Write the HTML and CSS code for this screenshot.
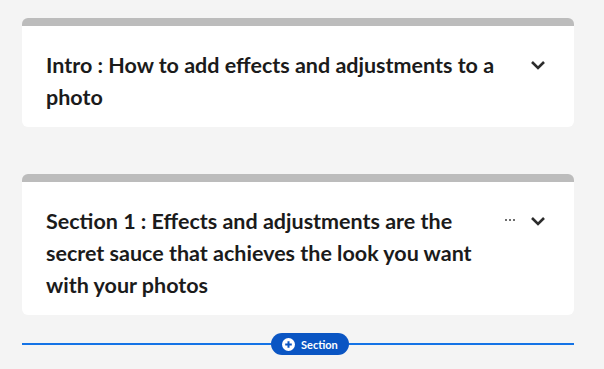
FILE: index.html
```html
<!DOCTYPE html>
<html>
<head>
	<title>Course outline</title>
	<link rel="stylesheet" href="styles.css">
</head>
<body>
<div class="outline">
	<div class="card">
		<div class="card-head">
			<h2 class="card-title">Intro : How to add effects and adjustments to a photo</h2>
			<div class="card-actions">
				<a class="toggle" href="javascript:void(0)">
					<svg width="16" height="10" viewBox="0 0 16 10"><path d="M2 2 L8 8 L14 2" fill="none" stroke="#2c2c2c" stroke-width="2.6" stroke-linejoin="miter"/></svg>
				</a>
			</div>
		</div>
	</div>

	<div class="card">
		<div class="card-head">
			<h2 class="card-title">Section 1 : Effects and adjustments are the secret sauce that achieves the look you want with your photos</h2>
			<div class="card-actions">
				<a class="more" href="javascript:void(0)"><i></i><i></i><i></i></a>
				<a class="toggle" href="javascript:void(0)">
					<svg width="16" height="10" viewBox="0 0 16 10"><path d="M2 2 L8 8 L14 2" fill="none" stroke="#2c2c2c" stroke-width="2.6" stroke-linejoin="miter"/></svg>
				</a>
			</div>
		</div>
	</div>

	<div class="add-row">
		<span class="add-line add-line-left"></span>
		<a class="add-section" href="javascript:void(0)">
			<svg width="13" height="13" viewBox="0 0 13 13"><circle cx="6.5" cy="6.5" r="6.5" fill="#fff"/><path d="M6.5 3.2 V9.8 M3.2 6.5 H9.8" stroke="#0a55c3" stroke-width="2"/></svg>
			Section
		</a>
		<span class="add-line"></span>
	</div>
</div>
</body>
</html>
```

FILE: styles.css
```css
* {
	padding: 0px;
	margin: 0px;
}
body {
	background: #f4f4f4;
	font-family: Lato, "Open Sans", sans-serif;
}
a {
	text-decoration: none;
}

.outline {
	padding: 18px 30px 0 22px;
}

.card {
	background: #fff;
	border-top: 8px solid #bcbcbc;
	border-radius: 6px;
	padding: 23px 28px 14px 24px;
	margin-bottom: 47px;
}
.card + .card {
	margin-bottom: 0;
}
.card-head {
	display: flex;
	align-items: flex-start;
	gap: 4px;
}
.card-title {
	flex: 1;
	font-size: 21.5px;
	font-weight: 700;
	line-height: 32px;
	color: #1b1b1b;
}
.card-actions {
	display: flex;
	align-items: center;
	justify-content: flex-end;
	gap: 15px;
	width: 41px;
	height: 32px;
}
.toggle {
	display: flex;
}
.more {
	display: flex;
	gap: 2px;
	margin-top: -3px;
}
.more i {
	width: 2px;
	height: 2px;
	background: #6e6e6e;
}

.add-row {
	display: flex;
	align-items: center;
	margin-top: 18px;
	height: 22px;
}
.add-line {
	flex: 1;
	height: 2.5px;
	background: #1473e6;
}
.add-line-left {
	flex: 0 0 249px;
}
.add-section {
	display: flex;
	align-items: center;
	gap: 6px;
	height: 22px;
	padding: 0 11px 0 11px;
	border-radius: 11px;
	background: #0a55c3;
	color: #fff;
	font-size: 11px;
	font-weight: 700;
}
```
